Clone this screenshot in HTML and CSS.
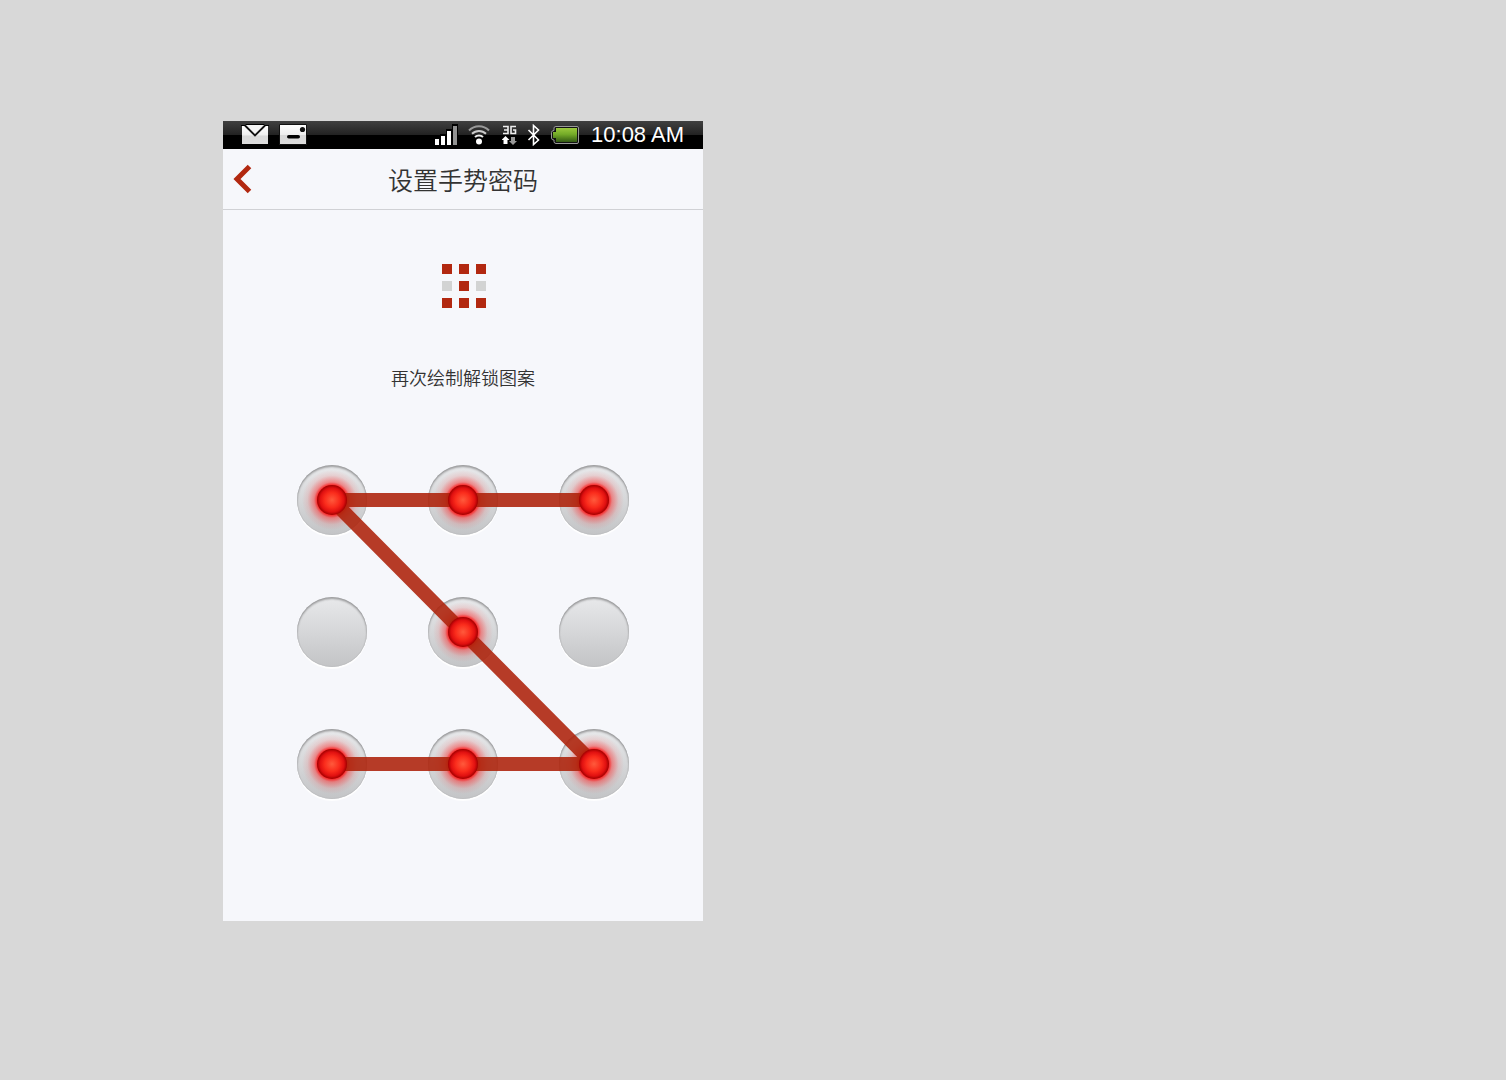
FILE: index.html
```html
<!DOCTYPE html>
<html lang="zh-CN">
<head>
<meta charset="utf-8">
<meta name="viewport" content="width=device-width, initial-scale=1">
<title>设置手势密码</title>
<link rel="stylesheet" href="styles.css">
</head>
<body>
<main class="phone">
  <div class="status">
    <div class="status-group notices">
      <svg width="28" height="22" viewBox="0 0 28 22" aria-hidden="true">
        <defs>
          <linearGradient id="paper" x1="0" y1="0" x2="0" y2="1">
            <stop offset="0" stop-color="#fff"/><stop offset=".5" stop-color="#eee"/><stop offset=".55" stop-color="#d8d8d8"/><stop offset="1" stop-color="#ddd"/>
          </linearGradient>
        </defs>
        <path d="M1 2h26v18H1z" fill="url(#paper)"/>
        <path d="M5 1h18v2l-9 9-9-9z" fill="#f4f4f4"/>
        <path d="M0 1.500h4L5 .5h18l1 1h4" fill="none" stroke="#000"/>
        <path d="M4 1.500L14 11.500 24 1.500" fill="none" stroke="#111" stroke-width="1.800"/>
      </svg>
      <svg width="28" height="22" viewBox="0 0 28 22" aria-hidden="true">
        <path d="M.5 .5h27v20H.5z" fill="url(#paper)" stroke="#111"/>
        <circle cx="23.500" cy="5.500" r="2.600" fill="#111"/>
        <rect x="8" y="11" width="13" height="3.500" rx="1.750" fill="#000"/>
      </svg>
    </div>
    <div class="status-group">
      <svg width="24" height="22" viewBox="0 0 24 22" aria-hidden="true">
        <path d="M0 13h6v8H0zM6 10h6v11H6zM12 5h6v16h-6zM18 0h6v21h-6z" fill="#000"/>
        <path d="M1 15h4v6H1zM7 12h4v9H7zM13 7h4v14h-4z" fill="#fff"/>
        <path d="M19 2h4v19h-4z" fill="#929292"/>
      </svg>
      <svg class="wifi" width="22" height="22" viewBox="0 0 22 22" fill="none" stroke-width="2" aria-hidden="true">
        <path d="M1 6.500a14 14 0 0 1 20 0" stroke="#999"/>
        <path d="M4 9.800a10 10 0 0 1 14 0" stroke="#ccc"/>
        <path d="M7 13a5.800 5.800 0 0 1 8 0" stroke="#eee"/>
        <circle cx="11" cy="17.500" r="3" fill="#fff"/>
      </svg>
      <svg class="data" width="15" height="22" viewBox="0 0 15 22" aria-hidden="true">
        <path d="M1 2.500h5v7H1M2 6h4M14 2.500H9v7h4.500V6H11" fill="none" stroke="#eee" stroke-width="1.600"/>
        <path d="M3.500 12l4 4h-2v4h-4v-4h-2z" fill="#fff"/>
        <path d="M9 13h4v4h2l-4 4-4-4h2z" fill="#999"/>
      </svg>
      <svg class="bluetooth" width="13" height="22" viewBox="0 0 13 22" aria-hidden="true">
        <path d="M1.500 6l10 10-5 4.500V1.500L11.500 6l-10 10" fill="none" stroke="#fff" stroke-width="1.600"/>
      </svg>
      <svg class="battery" width="28" height="22" viewBox="0 0 28 22" aria-hidden="true">
        <defs>
          <linearGradient id="charge" x1="0" y1="0" x2="0" y2="1">
            <stop offset="0" stop-color="#9ac83c"/><stop offset=".45" stop-color="#74ab28"/><stop offset="1" stop-color="#335a13"/>
          </linearGradient>
        </defs>
        <path d="M5 2.500h21q1.500 0 1.500 1.500v14q0 1.500-1.500 1.500H5q-2 0-2-2V16Q.5 16 .5 14V8.500q0-2 2.500-2V4q0-1.500 2-1.500z" fill="#111" stroke="#999"/>
        <path d="M5 4h21v14H5v-4H2V8h3z" fill="url(#charge)"/>
      </svg>
      <time class="clock">10:08 AM</time>
    </div>
  </div>
  <header class="bar">
    <button class="back" type="button" aria-label="返回">
      <svg width="20" height="30" viewBox="0 0 20 30" aria-hidden="true">
        <path d="M17.500 2.500L5 15l12.500 12.500" fill="none" stroke="#b22810" stroke-width="5"/>
      </svg>
    </button>
    <h1 class="title">设置手势密码</h1>
  </header>
  <div class="preview" aria-hidden="true">
    <i class="cell on"></i><i class="cell on"></i><i class="cell on"></i>
    <i class="cell"></i><i class="cell on"></i><i class="cell"></i>
    <i class="cell on"></i><i class="cell on"></i><i class="cell on"></i>
  </div>
  <p class="hint">再次绘制解锁图案</p>
  <div class="pad">
    <button class="node lit" type="button" aria-label="1"></button>
    <button class="node lit" type="button" aria-label="2"></button>
    <button class="node lit" type="button" aria-label="3"></button>
    <button class="node" type="button" aria-label="4"></button>
    <button class="node lit" type="button" aria-label="5"></button>
    <button class="node" type="button" aria-label="6"></button>
    <button class="node lit" type="button" aria-label="7"></button>
    <button class="node lit" type="button" aria-label="8"></button>
    <button class="node lit" type="button" aria-label="9"></button>
    <svg class="trace" viewBox="0 0 332 334" aria-hidden="true">
      <path d="M297 35H35L297 299H35" fill="none" stroke="#ad2109" stroke-opacity=".88" stroke-width="14" stroke-linejoin="bevel"/>
    </svg>
  </div>
</main>
</body>
</html>
```
FILE: styles.css
```css
* {
  box-sizing: border-box;
}

body {
  margin: 0;
  background: #d8d8d8;
  color: #333;
  font-family: "Noto Sans CJK SC", sans-serif;
}

.phone {
  width: 100%;
  max-width: 480px;
  min-height: 800px;
  margin: 121px 0 0 223px;
  background: #f6f7fb;
}

.status {
  display: flex;
  justify-content: space-between;
  align-items: center;
  height: 28px;
  padding: 0 19px 0 18px;
  background: linear-gradient(#404040, #222 50%, #000 50%);
}

.status-group {
  display: flex;
  align-items: center;
}

.notices {
  gap: 10px;
}

.wifi {
  margin-left: 10px;
}

.data {
  margin-left: 12px;
}

.bluetooth {
  margin-left: 10px;
}

.battery {
  margin: 0 12px 0 11px;
}

.clock {
  color: #fff;
  font: 22px/28px "Liberation Sans", Arial, sans-serif;
}

.bar {
  display: grid;
  grid-template-columns: 40px 1fr 40px;
  align-items: center;
  height: 61px;
  border-bottom: 1px solid #d0d1d5;
}

.back {
  display: flex;
  padding: 0 0 0 9px;
  border: 0;
  background: none;
}

.title {
  margin: 0;
  font-size: 25px;
  font-weight: 350;
  line-height: 36px;
  text-align: center;
}

.preview {
  display: grid;
  grid-template-columns: repeat(3, 10px);
  gap: 7px;
  justify-content: center;
  padding: 54px 0 0 2px;
}

.cell {
  height: 10px;
  background: #d2d3d3;
}

.cell.on {
  background: #b22810;
}

.hint {
  margin: 55px 0 0;
  font-size: 18px;
  font-weight: 350;
  line-height: 28px;
  text-align: center;
}

.pad {
  position: relative;
  display: grid;
  grid-template-columns: repeat(3, 70px);
  gap: 62px 61px;
  width: 332px;
  margin: 74px auto 0;
}

.node {
  position: relative;
  height: 70px;
  padding: 0;
  border: 0;
  border-radius: 50%;
  background: linear-gradient(#e8e9eb, #c3c4c6);
  box-shadow: inset 0 2px 2px rgba(0, 0, 0, .3), inset 0 0 1px rgba(0, 0, 0, .25), 0 2px 1px #fff;
}

.node.lit::before {
  content: "";
  position: absolute;
  inset: 5px;
  border-radius: 50%;
  background: radial-gradient(closest-side, #f00 45%, rgba(255, 30, 30, .45) 60%, rgba(255, 60, 60, .12) 82%, rgba(255, 60, 60, 0));
}

.node.lit::after {
  content: "";
  position: absolute;
  z-index: 2;
  inset: 20px;
  border-radius: 50%;
  background: radial-gradient(closest-side, #ff5a3c, #fa2c1c 50%, #e01010 80%, #a00000);
}

.trace {
  position: absolute;
  z-index: 1;
  inset: 0;
  width: 100%;
  height: 100%;
  pointer-events: none;
}
```
